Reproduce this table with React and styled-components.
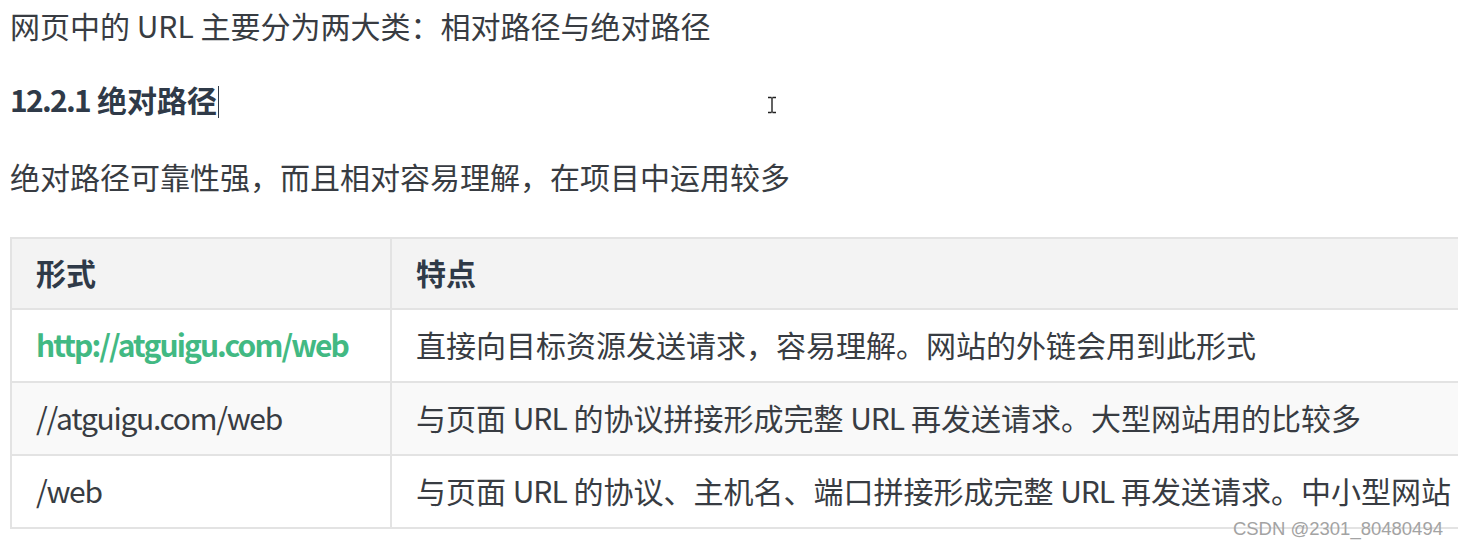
import React from "react";
import styled, { createGlobalStyle } from "styled-components";

const Global = createGlobalStyle`
  html, body {
    margin: 0;
    padding: 0;
    background: #ffffff;
    overflow: hidden;
  }
  body {
    font-family: "Noto Sans CJK SC", "Noto Sans", sans-serif;
    color: #383c42;
  }
`;

const Page = styled.div`
  position: relative;
  width: 1458px;
  height: 548px;
  overflow: hidden;
  padding-left: 10px;
  box-sizing: border-box;
`;

const Para = styled.p`
  margin: ${(p) => p.$mt || 0}px 0 0 0;
  font-size: 30px;
  line-height: 50px;
  white-space: nowrap;
  color: #383c42;
`;

const Heading = styled.h3`
  margin: 23px 0 0 0;
  font-size: 30px;
  line-height: 52px;
  font-weight: 700;
  color: #2f3a48;
  white-space: nowrap;
`;

const Num = styled.span`
  letter-spacing: -1.7px;
`;

const Caret = styled.span`
  display: inline-block;
  width: 1px;
  height: 32px;
  background: #2f3a48;
  margin-left: 1px;
  vertical-align: middle;
  position: relative;
  top: -2px;
`;

const Table = styled.table`
  margin-top: 36px;
  border-collapse: separate;
  border-spacing: 0;
  table-layout: fixed;
  width: 1532px;
  border-top: 2px solid #e3e3e3;
  border-left: 2px solid #e3e3e3;
  font-size: 30px;
`;

const Row = styled.tr`
  background: ${(p) => p.$bg || "#ffffff"};
`;

const Cell = styled.td`
  box-sizing: border-box;
  height: 73px;
  width: ${(p) => p.$w}px;
  padding: 0 24px 4px 24px;
  border-right: 2px solid #e3e3e3;
  border-bottom: 2px solid #e3e3e3;
  vertical-align: middle;
  white-space: nowrap;
  overflow: hidden;
  line-height: 40px;
  color: #383c42;
`;

const HeadCell = styled(Cell).attrs({ as: "th" })`
  text-align: left;
  font-weight: 700;
  color: #2f3a48;
  height: 71px;
`;

const Latin = styled.span`
  letter-spacing: ${(p) => p.$ls ?? -1.3}px;
`;

const Link = styled.span`
  color: #42b983;
  font-weight: 700;
  letter-spacing: -1.9px;
`;

const Watermark = styled.div`
  position: absolute;
  right: 15px;
  top: 518px;
  font-family: "Liberation Sans", Arial, sans-serif;
  font-size: 18.5px;
  line-height: 22px;
  color: #a3a3a3;
`;

const Cursor = styled.svg`
  position: absolute;
  left: 767px;
  top: 96px;
`;

const U = () => <Latin $ls={-1}>URL</Latin>;

const rows = [
  {
    form: <Link>http://atguigu.com/web</Link>,
    desc: <>直接向目标资源发送请求，容易理解。网站的外链会用到此形式</>,
    bg: "#ffffff",
  },
  {
    form: <Latin>//atguigu.com/web</Latin>,
    desc: (
      <>
        与页面 <U /> 的协议拼接形成完整 <U /> 再发送请求。大型网站用的比较多
      </>
    ),
    bg: "#f9f9f9",
  },
  {
    form: <Latin>/web</Latin>,
    desc: (
      <>
        与页面 <U /> 的协议、主机名、端口拼接形成完整 <U /> 再发送请求。中小型网站
      </>
    ),
    bg: "#ffffff",
  },
];

export default function App() {
  return (
    <>
      <Global />
      <Page>
        <Para>网页中的 URL 主要分为两大类：相对路径与绝对路径</Para>
        <Heading>
          <Num>12.2.1</Num> 绝对路径
          <Caret />
        </Heading>
        <Para $mt={26}>绝对路径可靠性强，而且相对容易理解，在项目中运用较多</Para>
        <Table>
          <colgroup>
            <col style={{ width: 380 }} />
            <col style={{ width: 1150 }} />
          </colgroup>
          <thead>
            <Row $bg="#f3f3f3">
              <HeadCell $w={380}>形式</HeadCell>
              <HeadCell $w={1150}>特点</HeadCell>
            </Row>
          </thead>
          <tbody>
            {rows.map((r, i) => (
              <Row key={i} $bg={r.bg}>
                <Cell $w={380}>{r.form}</Cell>
                <Cell $w={1150}>{r.desc}</Cell>
              </Row>
            ))}
          </tbody>
        </Table>
        <Cursor width="10" height="18" viewBox="0 0 10 18">
          <path d="M1 1.5h3.5M5.5 1.5H9M5 1.5v15M1 16.5h3.5M5.5 16.5H9" stroke="#222" strokeWidth="1.4" fill="none" />
        </Cursor>
        <Watermark>CSDN @2301_80480494</Watermark>
      </Page>
    </>
  );
}
